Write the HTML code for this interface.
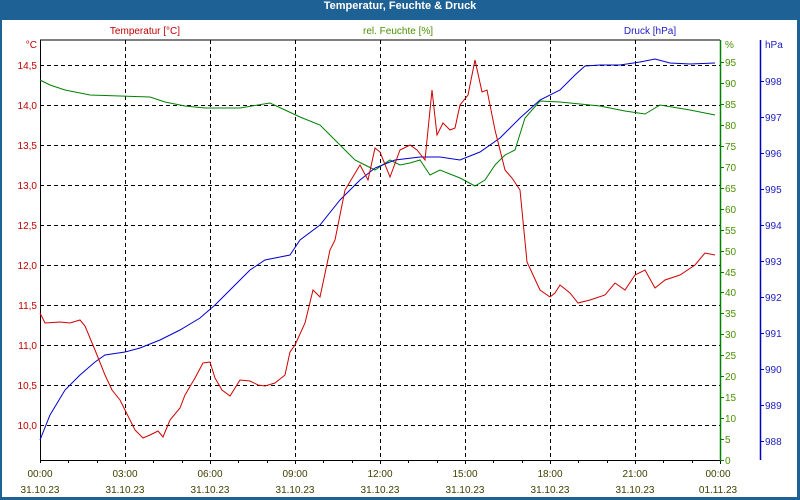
<!DOCTYPE html>
<html><head><meta charset="utf-8"><style>
html,body{margin:0;padding:0;background:#fff}
#w{position:relative;width:800px;height:500px;background:#1e6195;overflow:hidden}
#t{position:absolute;left:0;top:0;width:800px;height:20px;line-height:18px;text-align:center;color:#fff;font:bold 11px "Liberation Sans",sans-serif}
#c{position:absolute;left:2px;top:20px;width:795px;height:477px;background:#fff}
svg{position:absolute;left:0;top:0}
text{font-family:"Liberation Sans",sans-serif;font-size:10px}
</style></head><body><div id="w"><div id="t">Temperatur, Feuchte &amp; Druck</div><div id="c"></div>
<svg width="800" height="500" viewBox="0 0 800 500">
<g stroke="#000" stroke-dasharray="4,3" stroke-width="1">
<path d="M40 65.5H720M40 105.5H720M40 145.5H720M40 185.5H720M40 225.5H720M40 265.5H720M40 305.5H720M40 345.5H720M40 385.5H720M40 425.5H720"/>
<path d="M125.5 40V460M210.5 40V460M295.5 40V460M380.5 40V460M465.5 40V460M550.5 40V460M635.5 40V460"/>
</g>
<path d="M40 40H720" stroke="#000"/>
<path d="M40.5 40V463M40 460.5H720" stroke="#000"/>
<g stroke="#000"><path d="M125.5 460v4M210.5 460v4M295.5 460v4M380.5 460v4M465.5 460v4M550.5 460v4M635.5 460v4M720.5 460v4M68.5 460v3M97.5 460v3M153.5 460v3M182.5 460v3M238.5 460v3M267.5 460v3M323.5 460v3M352.5 460v3M408.5 460v3M437.5 460v3M493.5 460v3M522.5 460v3M578.5 460v3M607.5 460v3M663.5 460v3M692.5 460v3"/></g>
<path d="M720.5 40V461" stroke="#008000" stroke-width="1.5"/>
<path d="M760.5 40V460" stroke="#0000c0" stroke-width="1.5"/>
<g stroke="#008000"><path d="M720 460.5h4M720 439.5h4M720 418.5h4M720 397.5h4M720 376.5h4M720 355.5h4M720 334.5h4M720 313.5h4M720 292.5h4M720 272.5h4M720 251.5h4M720 230.5h4M720 209.5h4M720 188.5h4M720 167.5h4M720 146.5h4M720 125.5h4M720 104.5h4M720 83.5h4M720 62.5h4"/></g>
<g stroke="#0000c0"><path d="M760 441.5h4M760 405.5h4M760 369.5h4M760 333.5h4M760 297.5h4M760 261.5h4M760 225.5h4M760 189.5h4M760 153.5h4M760 117.5h4M760 81.5h4"/></g>
<polyline fill="none" stroke="#008000" points="40,80 50,85 65,90 90,95 120,96 150,97 165,102 185,106 205,108 240,108 270,103 285,110 300,117 320,125 335,140 345,150 355,160 365,165 375,170 390,160 400,165 410,163 420,160 430,175 440,170 460,178 475,186 485,180 495,165 505,155 515,150 525,118 540,101 560,102 600,106 625,111 645,114 660,105 690,110 715,115"/>
<polyline fill="none" stroke="#0000d0" points="40,440 50,415 65,390 80,375 95,362 105,355 125,352 140,348 160,340 180,330 200,318 215,305 230,290 250,270 265,260 280,257 290,255 300,240 320,225 340,200 360,180 375,168 395,160 420,157 440,157 460,160 480,152 500,138 520,118 540,100 560,90 575,75 585,66 600,65 620,65 640,62 655,59 670,63 690,64 715,63"/>
<polyline fill="none" stroke="#d00000" points="40,313 45,323 60,322 70,323 80,320 85,326 95,350 105,375 112,390 120,400 125,410 135,430 143,438 150,435 158,431 163,437 170,420 180,408 185,395 195,378 203,363 210,362 215,378 222,390 230,396 240,380 250,381 258,385 265,386 275,383 285,375 290,352 295,345 305,323 313,290 320,297 330,250 335,240 345,190 360,165 368,180 375,148 380,152 390,177 400,150 410,145 417,150 425,160 432,90 437,135 443,123 450,130 455,128 460,105 468,95 475,60 482,92 487,90 495,130 505,170 512,178 520,190 527,262 540,290 550,297 555,293 560,285 570,293 578,303 590,300 605,295 615,283 625,290 635,275 645,270 655,288 665,280 680,275 695,265 705,253 715,255"/>
<g fill="#c00000" text-anchor="end">
<text x="37" y="48">°C</text><text x="37" y="69">14,5</text><text x="37" y="109">14,0</text><text x="37" y="149">13,5</text><text x="37" y="189">13,0</text><text x="37" y="229">12,5</text><text x="37" y="269">12,0</text><text x="37" y="309">11,5</text><text x="37" y="349">11,0</text><text x="37" y="389">10,5</text><text x="37" y="429">10,0</text>
</g>
<g fill="#4a9000">
<text x="725" y="48">%</text><text x="725" y="66">95</text><text x="725" y="87">90</text><text x="725" y="108">85</text><text x="725" y="129">80</text><text x="725" y="150">75</text><text x="725" y="171">70</text><text x="725" y="192">65</text><text x="725" y="213">60</text><text x="725" y="234">55</text><text x="725" y="255">50</text><text x="725" y="276">45</text><text x="725" y="296">40</text><text x="725" y="317">35</text><text x="725" y="338">30</text><text x="725" y="359">25</text><text x="725" y="380">20</text><text x="725" y="401">15</text><text x="725" y="422">10</text><text x="725" y="443">5</text><text x="725" y="464">0</text>
</g>
<g fill="#2020c0">
<text x="765" y="48">hPa</text><text x="765" y="85">998</text><text x="765" y="121">997</text><text x="765" y="157">996</text><text x="765" y="193">995</text><text x="765" y="229">994</text><text x="765" y="265">993</text><text x="765" y="301">992</text><text x="765" y="337">991</text><text x="765" y="373">990</text><text x="765" y="409">989</text><text x="765" y="445">988</text>
</g>
<text x="145" y="34" fill="#c00000" text-anchor="middle">Temperatur [°C]</text>
<text x="398" y="34" fill="#4a9000" text-anchor="middle">rel. Feuchte [%]</text>
<text x="650" y="34" fill="#2020c0" text-anchor="middle">Druck [hPa]</text>
<g fill="#404000" text-anchor="middle">
<text x="40" y="477">00:00</text><text x="125" y="477">03:00</text><text x="210" y="477">06:00</text><text x="295" y="477">09:00</text><text x="380" y="477">12:00</text><text x="465" y="477">15:00</text><text x="550" y="477">18:00</text><text x="635" y="477">21:00</text><text x="718" y="477">00:00</text>
<text x="40" y="493">31.10.23</text><text x="125" y="493">31.10.23</text><text x="210" y="493">31.10.23</text><text x="295" y="493">31.10.23</text><text x="380" y="493">31.10.23</text><text x="465" y="493">31.10.23</text><text x="550" y="493">31.10.23</text><text x="635" y="493">31.10.23</text><text x="718" y="493">01.11.23</text>
</g>
</svg></div></body></html>
